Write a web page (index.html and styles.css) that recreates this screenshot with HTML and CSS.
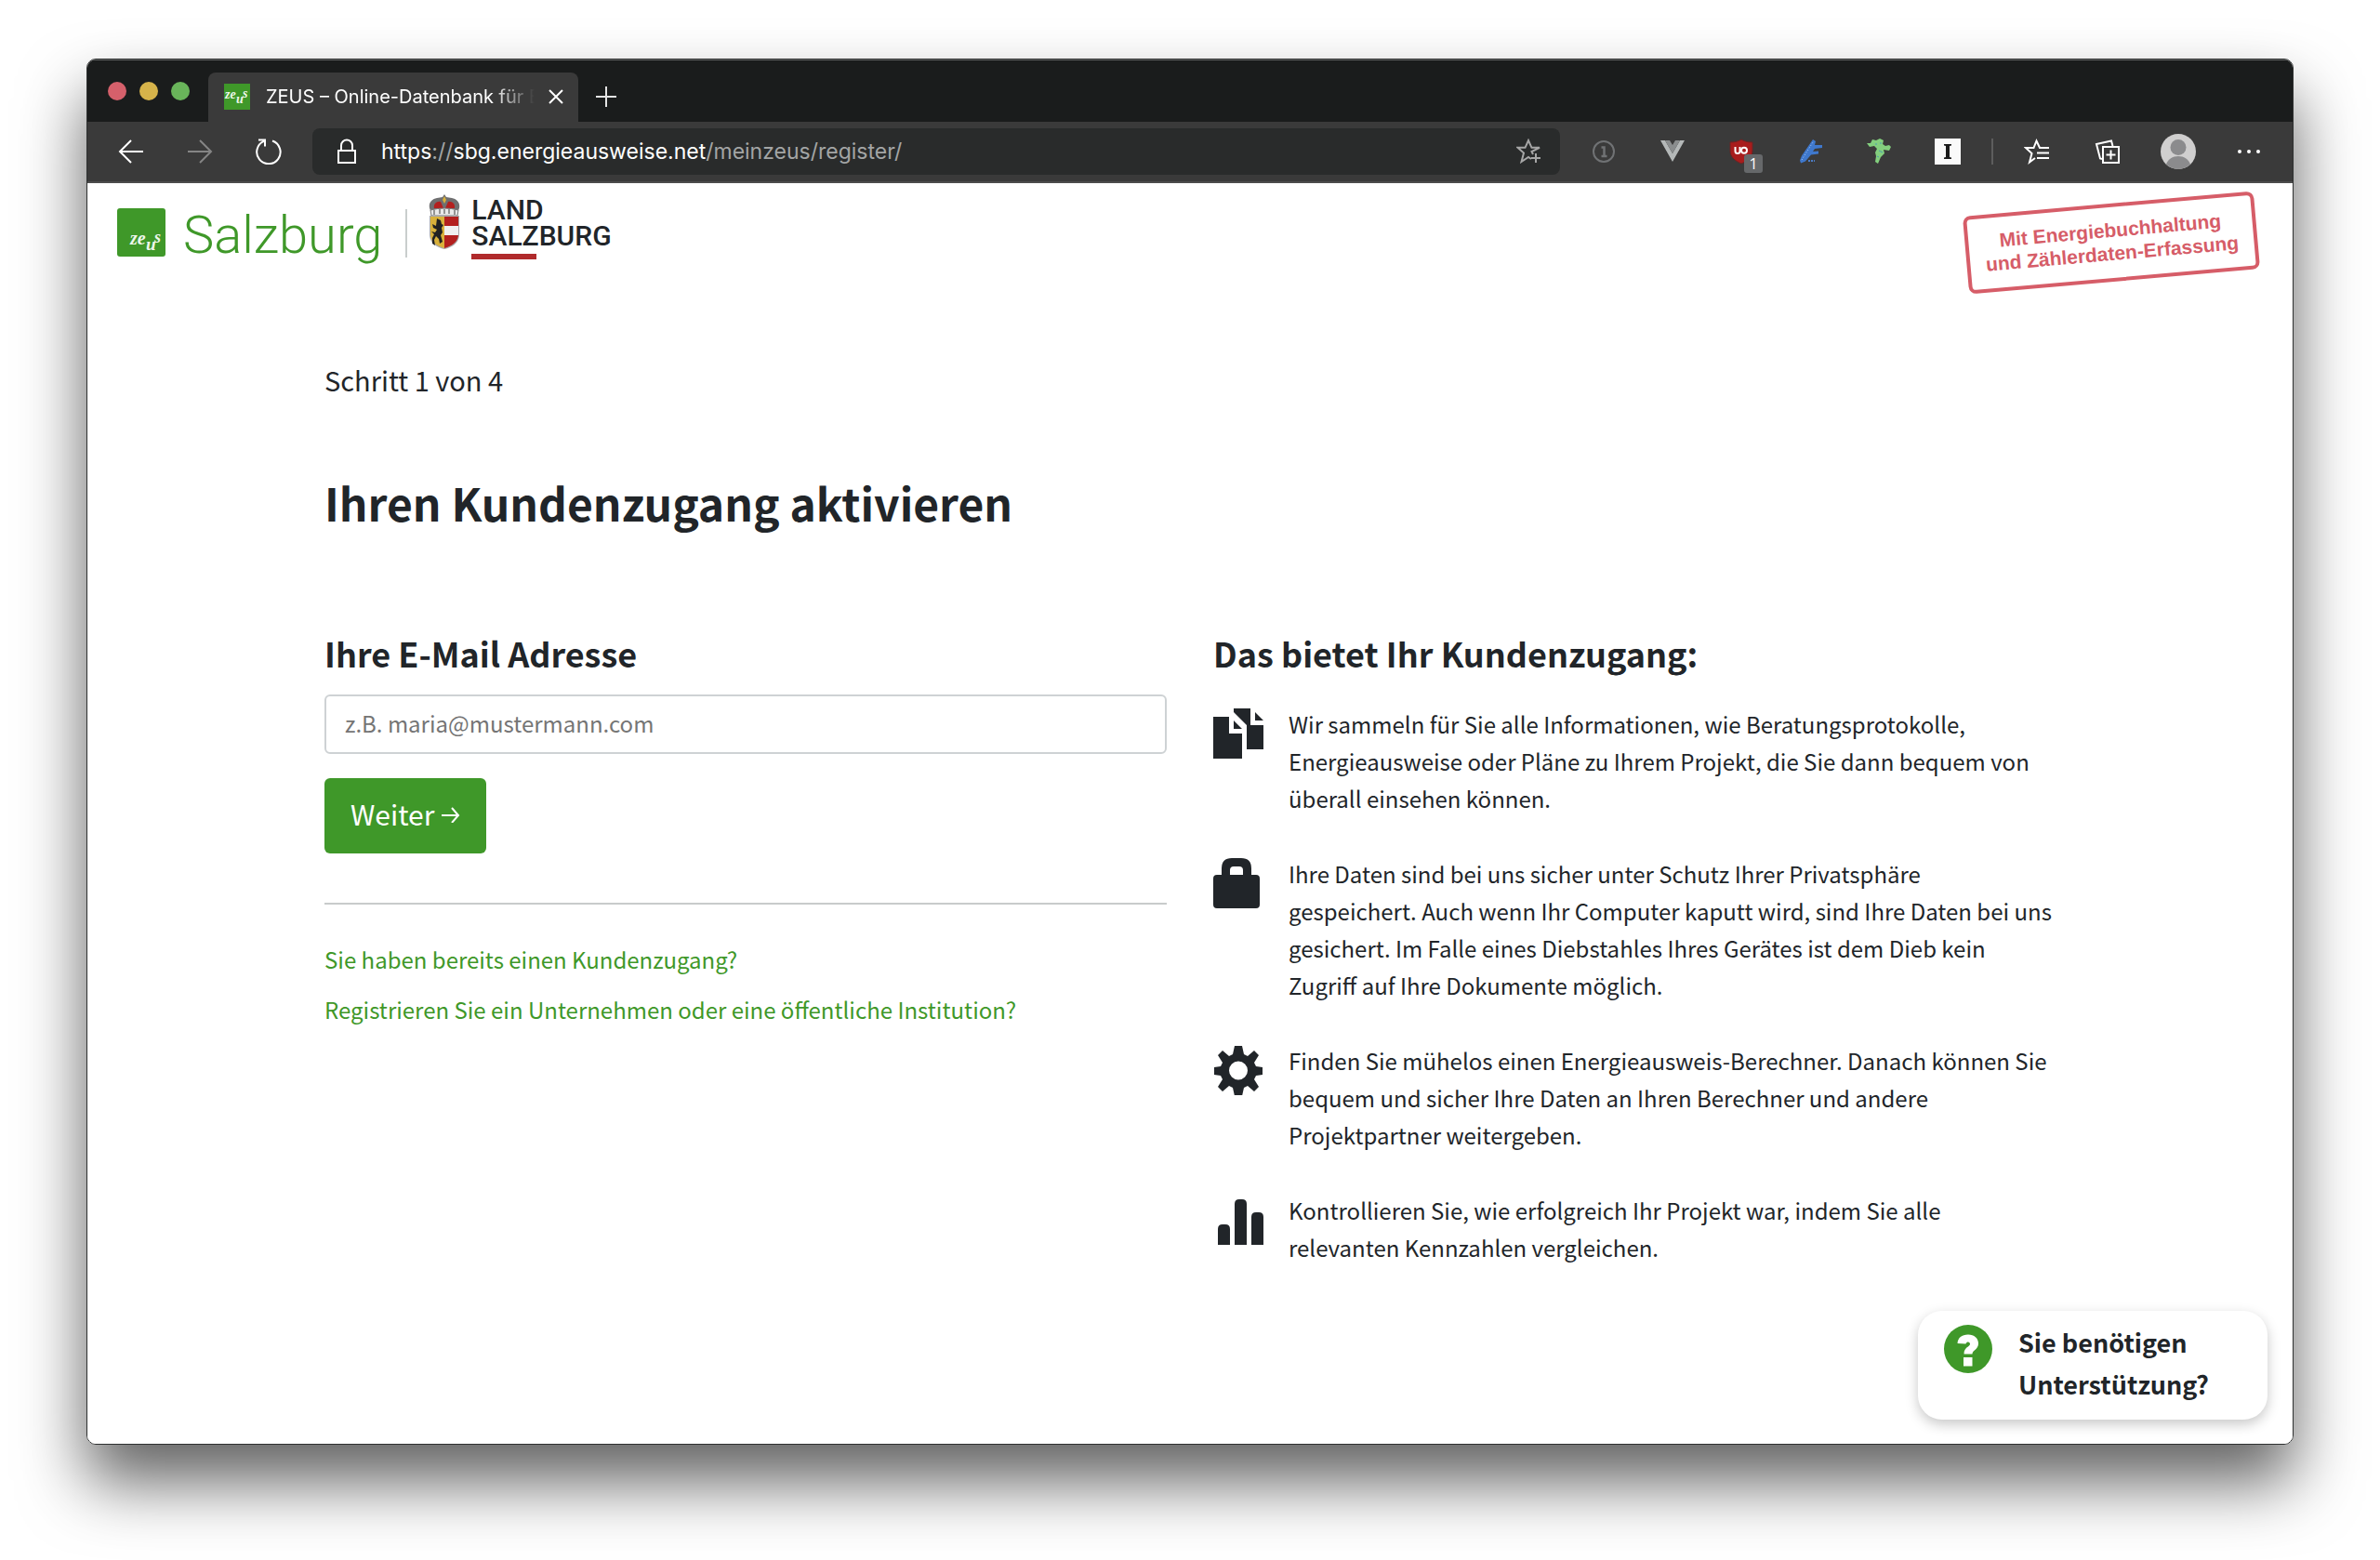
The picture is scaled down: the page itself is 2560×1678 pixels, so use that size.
FILE: index.html
```
<!DOCTYPE html>
<html lang="de">
<head>
    <meta charset="UTF-8">
    <meta name="viewport" content="width=device-width, initial-scale=1.0">
    <title>ZEUS – Online-Datenbank für Energieausweise</title>
    <link rel="stylesheet" href="styles.css">
</head>
<body>
<div class="window">
    <!-- Tabs -->
    <div class="tabbar">
        <div class="lights">
            <span class="light red"></span>
            <span class="light yellow"></span>
            <span class="light green"></span>
        </div>
        <div class="tab">
            <svg class="favicon" viewBox="0 0 28 28">
                <rect width="28" height="28" fill="#3f9829"/>
                <text x="1" y="16" class="zeus-text" font-size="14">ze</text>
                <text x="13" y="21" class="zeus-text" font-size="14">u</text>
                <text x="20" y="15" class="zeus-text" font-size="14">s</text>
            </svg>
            <span class="tab-title">ZEUS – Online-Datenbank für E</span>
            <button class="icon-btn tab-close" aria-label="Tab schließen">
                <svg width="16" height="16" viewBox="0 0 16 16"><path d="M1 1l14 14M15 1L1 15" stroke="#fff" stroke-width="2"/></svg>
            </button>
        </div>
        <button class="icon-btn tab-new" aria-label="Neuer Tab">
            <svg width="22" height="22" viewBox="0 0 22 22"><path d="M11 0v22M0 11h22" stroke="#e4e4e4" stroke-width="2"/></svg>
        </button>
    </div>

    <!-- Toolbar -->
    <div class="toolbar">
        <div class="nav">
            <button class="icon-btn" aria-label="Zurück">
                <svg width="28" height="28" viewBox="0 0 28 28" fill="none" stroke="#fff" stroke-width="2"><path d="M27 14H2M14 2L2 14l12 12"/></svg>
            </button>
            <button class="icon-btn" aria-label="Vorwärts">
                <svg width="28" height="28" viewBox="0 0 28 28" fill="none" stroke="#858585" stroke-width="2"><path d="M1 14h25M14 2l12 12-12 12"/></svg>
            </button>
            <button class="icon-btn" aria-label="Neu laden">
                <svg width="28" height="28" viewBox="0 0 28 28" fill="none" stroke="#fff" stroke-width="2"><path d="M18 2.500A12.700 12.700 0 1 1 9 2.800M3 1.500h7v7"/></svg>
            </button>
        </div>
        <div class="address">
            <svg width="22" height="28" viewBox="0 0 22 28" fill="none" stroke="#fff" stroke-width="2"><path d="M2 13h18v13H2zM5 13V7.500a6 6 0 0 1 12 0V13"/></svg>
            <div class="url"><b>https</b>://<b>sbg.energieausweise.net</b>/meinzeus/register/</div>
            <button class="icon-btn" aria-label="Zu Favoriten hinzufügen">
                <svg width="28" height="28" viewBox="0 0 28 28" fill="none" stroke="#a6a6a6" stroke-width="2"><path d="M18 17l-1.500-3L25 9.800h-8.500L13 2l-3.500 7.800H1.500l6.500 5.700L5.500 25l7.500-5 3 2M21 16v10M16 21h10"/></svg>
            </button>
        </div>
        <div class="extensions">
            <button class="icon-btn" aria-label="1Password">
                <svg width="28" height="28" viewBox="0 0 28 28" fill="none" stroke="#707274"><circle cx="14" cy="14" r="11" stroke-width="2"/><path d="M11.500 9.500h3V19M11.500 19h6" stroke-width="2.500"/></svg>
            </button>
            <button class="icon-btn" aria-label="Vue Devtools">
                <svg width="28" height="28" viewBox="0 0 28 28"><path fill="#b4b8b8" d="M1 2h5l8 14 8-14h5L14 25z"/><path fill="#8a8d8e" d="M6 2h5l3 5 3-5h5l-8 14z"/></svg>
            </button>
            <button class="icon-btn ublock" aria-label="uBlock Origin">
                <svg width="28" height="28" viewBox="0 0 28 28"><path d="M14 1c3 2 7 3 12 3v9c0 7-5 11-12 14C7 24 2 20 2 13V4c5 0 9-1 12-3z" fill="#a81c1c" stroke="#6b2424"/><path d="M7.500 9v4.500a2.500 2.500 0 0 0 5 0V9v5.500" fill="none" stroke="#fff" stroke-width="2"/><circle cx="17" cy="12.800" r="3" fill="none" stroke="#fff" stroke-width="2"/></svg>
                <span class="badge">1</span>
            </button>
            <button class="icon-btn" aria-label="Feder">
                <svg width="28" height="28" viewBox="0 0 28 28"><path fill="#3f78cc" d="M17 1l3 2-1 4 8 0v3l-8 1-2 3 6-.500v3l-8 1-6 7-5 2-1-3 2-5z"/><path d="M5 23L17 4" stroke="#a9c8f2" stroke-dasharray="1 2"/><path d="M12 24h7" stroke="#4c7cc4" stroke-width="2" stroke-dasharray="2 1"/></svg>
            </button>
            <button class="icon-btn" aria-label="Frosch">
                <svg width="28" height="28" viewBox="0 0 28 28"><path fill="#83cf7e" d="M7 1l4 1 4-2 4 2-1 4 3 2 4-1 2 2-2 4-6-1 1 4-4 4-3 7-3-2 1-6-1-4 2-4-3-3-5 1-3-4 4 0z"/><path d="M10 6h2M15 5h2M14 13l4 2M12 19l2 1" stroke="#4b9cb0"/></svg>
            </button>
            <button class="icon-btn" aria-label="Instapaper">
                <svg width="28" height="28" viewBox="0 0 28 28"><path fill="#fafafa" d="M0 0h28v28H0z"/><path fill="#1b1b1b" d="M10 6h8v1.500l-2 .5v12l2 .5V22h-8v-1.500l2-.5V8l-2-.5z"/></svg>
            </button>
        </div>
        <div class="divider"></div>
        <div class="extensions browser">
            <button class="icon-btn" aria-label="Favoriten">
                <svg width="28" height="28" viewBox="0 0 28 28" fill="none" stroke="#fff" stroke-width="2"><path d="M27 10H17L13.500 2.500 10.500 10H2l6.500 6L6 25.500l6-4.500M14 15.500h13M14 21h13"/></svg>
            </button>
            <button class="icon-btn" aria-label="Sammlungen">
                <svg width="28" height="28" viewBox="0 0 28 28" fill="none" stroke="#fff" stroke-width="2"><path d="M9 9h17v17H9zM17.500 12.500v10M12.500 17.500h10M8 22l-2-.5L2 6l16-3.500L19.500 8"/></svg>
            </button>
            <button class="icon-btn avatar" aria-label="Profil">
                <svg width="38" height="38" viewBox="0 0 38 38"><circle cx="19" cy="19" r="19" fill="#d0cfcf"/><circle cx="19" cy="14.500" r="8.500" fill="#8b8b8d"/><path d="M6 32.800C8 27 13 24 19 24s11 3 13 8.800A19 19 0 0 1 6 32.800z" fill="#8b8b8d"/></svg>
            </button>
            <button class="icon-btn" aria-label="Menü">
                <svg width="28" height="28" viewBox="0 0 28 28" fill="#fff"><circle cx="4" cy="14" r="2"/><circle cx="14" cy="14" r="2"/><circle cx="24" cy="14" r="2"/></svg>
            </button>
        </div>
    </div>

    <!-- Seite -->
    <div class="page">
        <header>
            <a class="brand" href="/">
                <svg width="52" height="52" viewBox="0 0 52 52">
                    <rect width="52" height="52" rx="3" fill="#3f9829"/>
                    <text x="14" y="39" class="zeus-text" font-size="20">ze</text>
                    <text x="31" y="45" class="zeus-text" font-size="19">u</text>
                    <text x="40" y="37" class="zeus-text" font-size="18">s</text>
                </svg>
                <span class="brand-name">Salzburg</span>
            </a>
            <div class="land">
                <svg width="34" height="60" viewBox="0 0 34 60">
                    <path d="M3 19C-2 12 2 5 9 4l6-1 2-3 2 3 6 1c7 1 11 8 6 15z" fill="#6f6f70"/>
                    <path d="M6 15c-1-5 3-8 7-7l3 7zM28 15c1-5-3-8-7-7l-3 7z" fill="#b3201f"/>
                    <path d="M17 2l2 4-2 4-2-4z" fill="#d9b13b"/>
                    <path d="M2 17q15-4 30 0l-1 6H3z" fill="#e9e9e9" stroke="#777"/>
                    <path d="M6 17v5M12 16v5M17 16v5M22 16v5M28 17v5" stroke="#777" stroke-width="1.500"/>
                    <path d="M1 23h32v20c0 9-7 14-16 16C8 57 1 52 1 43z" fill="#a9a9ab"/>
                    <path d="M2 24h15v34C8 55 2 51 2 43z" fill="#d9b13b"/>
                    <path d="M17 24h15v19c0 8-6 12-15 15z" fill="#b3201f"/>
                    <path d="M17 34h15v10H17z" fill="#f0f0f0"/>
                    <path d="M9 26l4 2 1 4 2 1-2 3 1 5-2 3 2 7-3 2-1-5-3-3-2 4 1 6-3-2 0-6 2-4-3-3 4 1 2-3-4-2-1-4 4 2z" fill="#222"/>
                </svg>
                <div class="land-name">
                    <span>LAND</span>
                    <span>SALZBURG</span>
                </div>
            </div>
            <div class="stamp">Mit Energiebuchhaltung<br>und Zählerdaten-Erfassung</div>
        </header>

        <main>
            <p class="step">Schritt 1 von 4</p>
            <h1>Ihren Kundenzugang aktivieren</h1>
            <div class="columns">
                <form>
                    <h2><label for="email">Ihre E-Mail Adresse</label></h2>
                    <input type="email" id="email" name="email" placeholder="z.B. maria@mustermann.com">
                    <button type="submit" class="weiter">Weiter
                        <svg width="20" height="20" viewBox="0 0 20 20" fill="none" stroke="#fff" stroke-width="2"><path d="M0 12h18M11 4l7 8-7 8"/></svg>
                    </button>
                    <hr>
                    <a class="link" href="/login">Sie haben bereits einen Kundenzugang?</a>
                    <a class="link" href="/institution">Registrieren Sie ein Unternehmen oder eine öffentliche Institution?</a>
                </form>
                <section>
                    <h2>Das bietet Ihr Kundenzugang:</h2>
                    <ul>
                        <li>
                            <svg width="54" height="54" viewBox="0 0 54 54"><path d="M0 9h17v18h14v27H0zM22 13v9h9zM22 0h18v18h14v26H36V18L22 4zM45 4v9h9z"/></svg>
                            <p>Wir sammeln für Sie alle Informationen, wie Beratungsprotokolle, Energieausweise oder Pläne zu Ihrem Projekt, die Sie dann bequem von überall einsehen können.</p>
                        </li>
                        <li>
                            <svg width="54" height="54" viewBox="0 0 54 54"><path fill-rule="evenodd" d="M4 18h5V11Q9 0 20 0h10q11 0 11 11v7h5q4 0 4 4v28q0 4-4 4H4q-4 0-4-4V22q0-4 4-4zM18 18h14v-5q0-4-4-4h-6q-4 0-4 4z"/></svg>
                            <p>Ihre Daten sind bei uns sicher unter Schutz Ihrer Privatsphäre gespeichert. Auch wenn Ihr Computer kaputt wird, sind Ihre Daten bei uns gesichert. Im Falle eines Diebstahles Ihres Gerätes ist dem Dieb kein Zugriff auf Ihre Dokumente möglich.</p>
                        </li>
                        <li>
                            <svg width="54" height="54" viewBox="0 0 54 54"><path fill-rule="evenodd" d="M23 1h8l2 9 4 2 7-6 5 5-5 8 2 4 7 1v8l-7 1-2 4 5 8-5 5-7-6-4 2-2 9h-8l-2-9-4-2-7 6-5-5 5-8-2-4-7-1v-8l7-1 2-4-5-8 5-5 7 6 4-2zM27 17.500a10 10 0 1 0 0 20 10 10 0 1 0 0-20z"/></svg>
                            <p>Finden Sie mühelos einen Energieausweis-Berechner. Danach können Sie bequem und sicher Ihre Daten an Ihren Berechner und andere Projektpartner weitergeben.</p>
                        </li>
                        <li>
                            <svg width="54" height="54" viewBox="0 0 54 54"><path d="M5 54V37q0-5 5-5h3q5 0 5 5v17zM23 54V10q0-5 5-5h3q5 0 5 5v44zM41 54V24q0-5 5-5h3q5 0 5 5v30z"/></svg>
                            <p>Kontrollieren Sie, wie erfolgreich Ihr Projekt war, indem Sie alle relevanten Kennzahlen vergleichen.</p>
                        </li>
                    </ul>
                </section>
            </div>
        </main>

        <button class="help">
            <svg width="52" height="52" viewBox="0 0 52 52"><circle cx="26" cy="26" r="26" fill="#3f9829"/><path fill="#fff" d="M14.500 20C15 14 19 10.500 26 10.500c6.500 0 11 4 11 9.500 0 7-6.500 7-6.500 11.500h-9c0-8 6.500-7.500 6.500-11 0-1-1-2-2-2s-2 .5-2.500 2zM21 35h9.500v9.500H21z"/></svg>
            <span>Sie benötigen Unterstützung?</span>
        </button>
    </div>
</div>
</body>
</html>
```
FILE: styles.css
```
* {
    box-sizing: border-box;
}
body {
    margin: 0;
    min-height: 100vh;
    padding: 63px 93px 124px;
    display: flex;
    background-color: white;
    color: #212529;
    font-family: "Noto Sans CJK JP", "Noto Sans", sans-serif;
    font-size: 24px;
    line-height: 40px;
}
h1, h2, p, ul {
    margin: 0;
    padding: 0;
}
button, input {
    font-family: inherit;
    color: inherit;
}
svg {
    display: block;
    flex: none;
}
.window {
    flex: 1;
    min-width: 0;
    display: flex;
    flex-direction: column;
    border: 1px solid #2e3030;
    border-radius: 10px;
    overflow: hidden;
    box-shadow: 0 40px 70px rgba(0, 0, 0, 0.62);
}
.icon-btn {
    display: flex;
    padding: 0;
    border: none;
    background: none;
    cursor: pointer;
}

/* Tabs */
.tabbar {
    display: flex;
    align-items: flex-end;
    height: 67px;
    background-color: #1a1c1c;
    border-top: 1px solid #606262;
    font-family: Inter, sans-serif;
    color: white;
}
.lights {
    display: flex;
    gap: 14px;
    height: 66px;
    width: 130px;
    padding-left: 22px;
    align-items: center;
}
.light {
    width: 20px;
    height: 20px;
    border-radius: 50%;
}
.red {
    background-color: #d5606b;
}
.yellow {
    background-color: #d6b34a;
}
.green {
    background-color: #69b45a;
}
.tab {
    display: flex;
    align-items: center;
    width: 398px;
    height: 53px;
    padding: 0 16px 1px 17px;
    background-color: #3a3a3a;
    border-radius: 8px 8px 0 0;
    font-size: 20px;
}
.favicon {
    width: 28px;
    height: 28px;
}
.zeus-text {
    font-family: "Liberation Serif", serif;
    font-style: italic;
    font-weight: bold;
    fill: #eef7ec;
}
.tab-title {
    flex: 1;
    margin: 0 15px 0 17px;
    overflow: hidden;
    white-space: nowrap;
    -webkit-mask-image: linear-gradient(90deg, #000 84%, transparent);
    mask-image: linear-gradient(90deg, #000 84%, transparent);
}
.tab-new {
    height: 53px;
    margin-left: 19px;
    padding-bottom: 2px;
    align-items: center;
}

/* Toolbar */
.toolbar {
    display: flex;
    align-items: center;
    height: 66px;
    padding-right: 33px;
    background-color: #3a3a3a;
    border-bottom: 2px solid #4c4c4c;
}
.nav {
    display: flex;
    gap: 46px;
    padding: 0 33px;
}
.address {
    flex: 1;
    display: flex;
    align-items: center;
    height: 50px;
    padding: 0 19px 0 26px;
    background-color: #292b2b;
    border-radius: 8px;
    font-family: Inter, sans-serif;
    font-size: 23px;
    color: #a3a5a5;
}
.url {
    flex: 1;
    margin-left: 26px;
}
.url b {
    font-weight: normal;
    color: white;
}
.extensions {
    display: flex;
    align-items: center;
    gap: 46px;
    padding-left: 33px;
}
.browser {
    gap: 48px;
}
.divider {
    width: 2px;
    height: 28px;
    margin-left: 33px;
    background-color: #5d5d5d;
}
.ublock {
    position: relative;
}
.badge {
    position: absolute;
    left: 17px;
    top: 17px;
    width: 20px;
    height: 20px;
    border-radius: 3px;
    background-color: #66686a;
    color: white;
    font-family: "Open Sans", sans-serif;
    font-size: 16px;
    line-height: 20px;
}
.avatar {
    margin: 0 -5px;
}

/* Seite */
.page {
    position: relative;
    flex: 1;
    background-color: white;
}
header {
    display: flex;
    align-items: flex-start;
    height: 138px;
    padding: 12px 38px 0 32px;
}
.brand {
    display: flex;
    gap: 19px;
    padding: 15px 25px 0 0;
    text-decoration: none;
}
.brand-name {
    font-family: Roboto, sans-serif;
    font-weight: 300;
    font-size: 56px;
    line-height: 58px;
    color: #3f9829;
}
.land {
    display: flex;
    gap: 12px;
    padding-left: 25px;
    background: linear-gradient(#c9cecd, #c9cecd) 0 16px / 2px 52px no-repeat;
}
.land-name {
    font-family: Roboto, sans-serif;
    font-weight: 500;
    font-size: 30px;
    line-height: 28px;
    padding-top: 3px;
}
.land-name span {
    display: block;
}
.land-name::after {
    content: "";
    display: block;
    width: 70px;
    height: 6px;
    margin-top: 5px;
    background-color: #b02a2c;
}
.stamp {
    margin: 10px 0 0 auto;
    width: 314px;
    height: 84px;
    padding-top: 12px;
    border: 4px solid #d65d68;
    border-radius: 8px;
    color: #d65d68;
    font-family: "Liberation Sans", Arial, sans-serif;
    font-weight: bold;
    font-size: 21px;
    line-height: 25px;
    text-align: center;
    transform: rotate(-5deg);
}
main {
    max-width: 1862px;
    margin: 0 auto;
    padding: 51px 0;
}
.step {
    font-size: 29px;
    line-height: 44px;
}
h1 {
    margin: 81px 0 111px;
    font-size: 48px;
    line-height: 58px;
}
h2 {
    font-size: 36px;
    line-height: 44px;
}
.columns {
    display: grid;
    grid-template-columns: 1fr 1fr;
    gap: 50px;
}
input[type="email"] {
    display: block;
    width: 100%;
    height: 64px;
    margin-top: 23px;
    padding: 0 20px 4px;
    border: 2px solid #ced2d4;
    border-radius: 6px;
    font-size: 24px;
}
input::placeholder {
    color: #757575;
}
.weiter {
    display: flex;
    align-items: center;
    gap: 8px;
    height: 81px;
    margin: 26px 0 53px;
    padding: 0 28px 6px;
    border: none;
    border-radius: 6px;
    background-color: #3f9829;
    color: white;
    font-size: 30px;
    cursor: pointer;
}
hr {
    height: 2px;
    margin: 0 0 39px;
    border: none;
    background-color: #c8cbcb;
}
.link {
    display: block;
    margin-bottom: 14px;
    color: #3f9829;
    text-decoration: none;
}
ul {
    display: flex;
    flex-direction: column;
    gap: 41px;
    margin-top: 35px;
    list-style: none;
}
li {
    display: flex;
    gap: 27px;
}
li p {
    max-width: 821px;
}
li svg {
    margin-top: 3px;
    fill: #212529;
}
.help {
    position: absolute;
    right: 27px;
    bottom: 26px;
    display: flex;
    gap: 28px;
    width: 376px;
    height: 117px;
    padding: 15px 28px;
    border: none;
    border-radius: 26px;
    background-color: white;
    box-shadow: 0 5px 14px rgba(0, 0, 0, 0.22);
    font-size: 27px;
    font-weight: bold;
    line-height: 45px;
    text-align: left;
    cursor: pointer;
}
.help span {
    margin-top: -4px;
}
```
